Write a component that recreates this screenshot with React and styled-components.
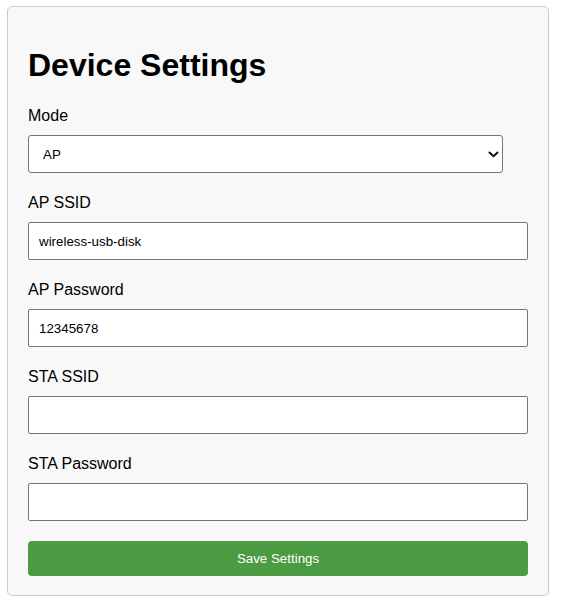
import React from "react";
import styled, { createGlobalStyle } from "styled-components";

const Global = createGlobalStyle`
  html, body { margin: 0; padding: 0; background: #ffffff; }
  body { font-family: "Liberation Sans", Arial, Helvetica, sans-serif; color: #000; }
  * { box-sizing: border-box; }
`;

const Page = styled.div`
  padding: 6px 7px;
`;

const Card = styled.div`
  width: 542px;
  background: #f8f8f8;
  border: 1px solid #cccccc;
  border-radius: 5px;
  padding: 20px 20px 19px;
`;

const Title = styled.h1`
  font-size: 32px;
  font-weight: 700;
  line-height: normal;
  margin: 20px 0 22px;
`;

const Label = styled.label`
  display: block;
  font-size: 16px;
  line-height: 19px;
  margin-bottom: 10px;
`;

const Field = styled.input`
  display: block;
  width: 100%;
  height: 38px;
  margin: 0 0 20px;
  padding: 0 10px;
  font-family: "Liberation Sans", Arial, Helvetica, sans-serif;
  font-size: 13.33px;
  color: #000;
  background: #fff;
  border: 1px solid #767676;
  border-radius: 2px;
  outline: none;
`;

const SelectWrap = styled.div`
  position: relative;
  width: 475px;
  margin-bottom: 20px;
`;

const Select = styled.select`
  display: block;
  width: 100%;
  height: 38px;
  padding: 0 24px 0 14px;
  appearance: none;
  -webkit-appearance: none;
  font-family: "Liberation Sans", Arial, Helvetica, sans-serif;
  font-size: 13.33px;
  color: #000;
  background: #fff;
  border: 1px solid #767676;
  border-radius: 3px;
  outline: none;
`;

const Chevron = styled.svg`
  position: absolute;
  right: 4px;
  top: 16px;
  width: 11px;
  height: 7px;
  pointer-events: none;
`;

const Button = styled.button`
  display: block;
  width: 100%;
  height: 35px;
  margin-top: 2px;
  padding: 10px;
  border: none;
  border-radius: 4px;
  background: #4a9b42;
  color: #fff;
  font-family: "Liberation Sans", Arial, Helvetica, sans-serif;
  font-size: 13.33px;
  line-height: 15px;
  cursor: pointer;
`;

const fields = [
  { id: "ap_ssid", label: "AP SSID", value: "wireless-usb-disk" },
  { id: "ap_pass", label: "AP Password", value: "12345678" },
  { id: "sta_ssid", label: "STA SSID", value: "" },
  { id: "sta_pass", label: "STA Password", value: "" },
];

export default function App() {
  return (
    <Page>
      <Global />
      <Card>
        <Title>Device Settings</Title>
        <Label htmlFor="mode">Mode</Label>
        <SelectWrap>
          <Select id="mode" defaultValue="AP">
            <option value="AP">AP</option>
            <option value="STA">STA</option>
          </Select>
          <Chevron viewBox="0 0 11 7">
            <path d="M1.5 1.5 L5.5 5.2 L9.5 1.5" fill="none" stroke="#111" strokeWidth="2" strokeLinecap="round" strokeLinejoin="round" />
          </Chevron>
        </SelectWrap>
        {fields.map((f) => (
          <React.Fragment key={f.id}>
            <Label htmlFor={f.id}>{f.label}</Label>
            <Field id={f.id} type="text" defaultValue={f.value} />
          </React.Fragment>
        ))}
        <Button type="button">Save Settings</Button>
      </Card>
    </Page>
  );
}
